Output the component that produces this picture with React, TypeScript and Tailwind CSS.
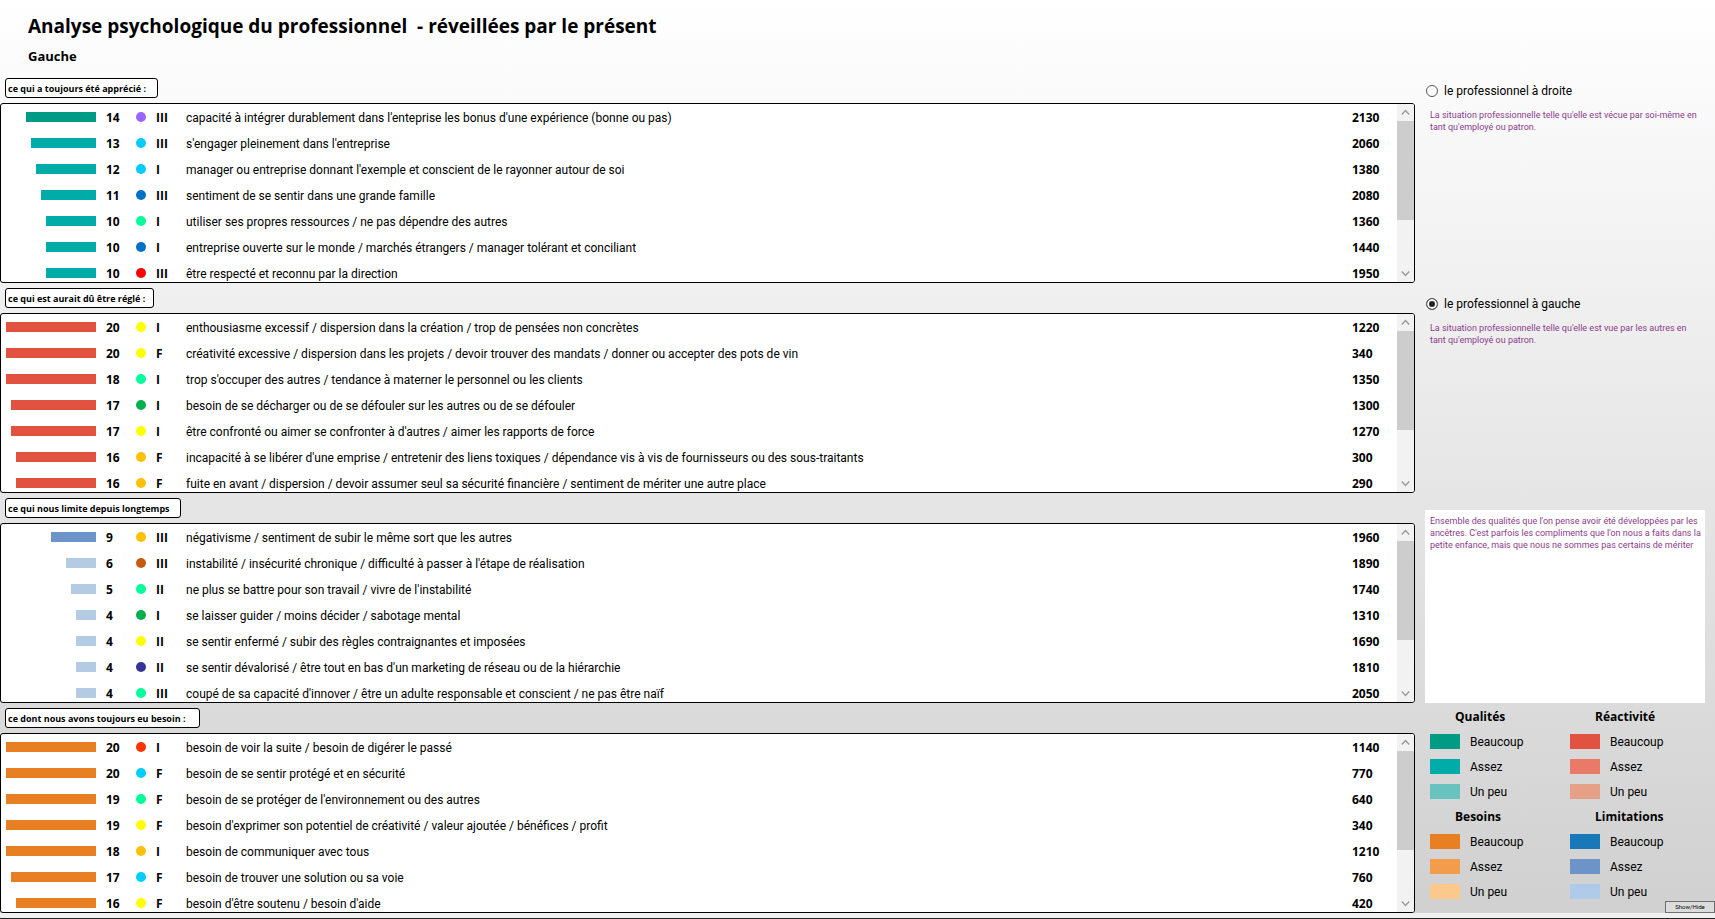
import React, { useState } from 'react';

type Row = {
  score: number;
  dot: string;
  level: string;
  text: string;
  code: number;
};

type Section = {
  title: string;
  tagWidth: string;
  color: (score: number) => string;
  rows: Row[];
};

const sections: Section[] = [
  {
    title: 'ce qui a toujours été apprécié :',
    tagWidth: 'w-[153px]',
    color: (score) => (score > 13 ? 'bg-[#009b84]' : 'bg-[#00aca8]'),
    rows: [
      { score: 14, dot: 'bg-[#9966ff]', level: 'III', text: "capacité à intégrer durablement dans l'enteprise les bonus d'une expérience (bonne ou pas)", code: 2130 },
      { score: 13, dot: 'bg-[#00ccff]', level: 'III', text: "s'engager pleinement dans l'entreprise", code: 2060 },
      { score: 12, dot: 'bg-[#00ccff]', level: 'I', text: "manager ou entreprise donnant l'exemple et conscient de le rayonner autour de soi", code: 1380 },
      { score: 11, dot: 'bg-[#0070c8]', level: 'III', text: 'sentiment de se sentir dans une grande famille', code: 2080 },
      { score: 10, dot: 'bg-[#00ff99]', level: 'I', text: 'utiliser ses propres ressources / ne pas dépendre des autres', code: 1360 },
      { score: 10, dot: 'bg-[#0070c8]', level: 'I', text: 'entreprise ouverte sur le monde / marchés étrangers / manager tolérant et conciliant', code: 1440 },
      { score: 10, dot: 'bg-[#ff0000]', level: 'III', text: 'être respecté et reconnu par la direction', code: 1950 },
    ],
  },
  {
    title: 'ce qui est aurait dû être réglé :',
    tagWidth: 'w-[149px]',
    color: () => 'bg-[#e15241]',
    rows: [
      { score: 20, dot: 'bg-[#ffff00]', level: 'I', text: 'enthousiasme excessif / dispersion dans la création / trop de pensées non concrètes', code: 1220 },
      { score: 20, dot: 'bg-[#ffff00]', level: 'F', text: 'créativité excessive / dispersion dans les projets / devoir trouver des mandats / donner ou accepter des pots de vin', code: 340 },
      { score: 18, dot: 'bg-[#00ff99]', level: 'I', text: "trop s'occuper des autres / tendance à materner le personnel ou les clients", code: 1350 },
      { score: 17, dot: 'bg-[#00b050]', level: 'I', text: 'besoin de se décharger ou de se défouler sur les autres ou de se défouler', code: 1300 },
      { score: 17, dot: 'bg-[#ffff00]', level: 'I', text: "être confronté ou aimer se confronter à d'autres / aimer les rapports de force", code: 1270 },
      { score: 16, dot: 'bg-[#ffc000]', level: 'F', text: "incapacité à se libérer d'une emprise / entretenir des liens toxiques / dépendance vis à vis de fournisseurs ou des sous-traitants", code: 300 },
      { score: 16, dot: 'bg-[#ffc000]', level: 'F', text: 'fuite en avant / dispersion / devoir assumer seul sa sécurité financière / sentiment de mériter une autre place', code: 290 },
    ],
  },
  {
    title: 'ce qui nous limite depuis longtemps',
    tagWidth: 'w-[176px]',
    color: (score) => (score > 8 ? 'bg-[#6c94c8]' : 'bg-[#b4cbe4]'),
    rows: [
      { score: 9, dot: 'bg-[#ffc000]', level: 'III', text: 'négativisme / sentiment de subir le même sort que les autres', code: 1960 },
      { score: 6, dot: 'bg-[#c55a11]', level: 'III', text: "instabilité / insécurité chronique / difficulté à passer à l'étape de réalisation", code: 1890 },
      { score: 5, dot: 'bg-[#00ff99]', level: 'II', text: "ne plus se battre pour son travail / vivre de l'instabilité", code: 1740 },
      { score: 4, dot: 'bg-[#00b050]', level: 'I', text: 'se laisser guider / moins décider / sabotage mental', code: 1310 },
      { score: 4, dot: 'bg-[#ffff00]', level: 'II', text: 'se sentir enfermé / subir des règles contraignantes et imposées', code: 1690 },
      { score: 4, dot: 'bg-[#333399]', level: 'II', text: "se sentir dévalorisé / être tout en bas d'un marketing de réseau ou de la hiérarchie", code: 1810 },
      { score: 4, dot: 'bg-[#00ff99]', level: 'III', text: "coupé de sa capacité d'innover / être un adulte responsable et conscient / ne pas être naïf", code: 2050 },
    ],
  },
  {
    title: 'ce dont nous avons toujours eu besoin :',
    tagWidth: 'w-[195px]',
    color: () => 'bg-[#e97f23]',
    rows: [
      { score: 20, dot: 'bg-[#ff3300]', level: 'I', text: 'besoin de voir la suite / besoin de digérer le passé', code: 1140 },
      { score: 20, dot: 'bg-[#00ccff]', level: 'F', text: 'besoin de se sentir protégé et en sécurité', code: 770 },
      { score: 19, dot: 'bg-[#00ff99]', level: 'F', text: "besoin de se protéger de l'environnement ou des autres", code: 640 },
      { score: 19, dot: 'bg-[#ffff00]', level: 'F', text: "besoin d'exprimer son potentiel de créativité / valeur ajoutée / bénéfices / profit", code: 340 },
      { score: 18, dot: 'bg-[#ffc000]', level: 'I', text: 'besoin de communiquer avec tous', code: 1210 },
      { score: 17, dot: 'bg-[#00ccff]', level: 'F', text: 'besoin de trouver une solution ou sa voie', code: 760 },
      { score: 16, dot: 'bg-[#ffff00]', level: 'F', text: "besoin d'être soutenu / besoin d'aide", code: 420 },
    ],
  },
];

const legends = [
  { title: 'Qualités', colors: ['bg-[#009b84]', 'bg-[#00aca8]', 'bg-[#68c2c0]'] },
  { title: 'Réactivité', colors: ['bg-[#e15241]', 'bg-[#ea7a68]', 'bg-[#e6a088]'] },
  { title: 'Besoins', colors: ['bg-[#e97f23]', 'bg-[#f29c4c]', 'bg-[#fcc88c]'] },
  { title: 'Limitations', colors: ['bg-[#1878b8]', 'bg-[#6c94c8]', 'bg-[#b0cbea]'] },
];

const levels = ['Beaucoup', 'Assez', 'Un peu'];

const choices = [
  {
    id: 'droite',
    label: 'le professionnel à droite',
    help: "La situation professionnelle telle qu'elle est vécue par soi-même en tant qu'employé ou patron.",
  },
  {
    id: 'gauche',
    label: 'le professionnel à gauche',
    help: "La situation professionnelle telle qu'elle est vue par les autres en tant qu'employé ou patron.",
  },
];

function Chevron({ down = false }: { down?: boolean }) {
  return (
    <svg viewBox="0 0 17 17" className={down ? 'size-[17px] rotate-180' : 'size-[17px]'} fill="none" stroke="#9a9a9a" strokeWidth="1.4">
      <path d="M4.8 10.5 8.5 6.5l3.7 4" />
    </svg>
  );
}

function ScrollBar() {
  return (
    <div className="flex w-[17px] shrink-0 flex-col bg-[#f2f2f2]">
      <button type="button" aria-label="Défiler vers le haut" className="h-[17px]">
        <Chevron />
      </button>
      <div className="h-[99px] bg-[#cdcdcd]" />
      <button type="button" aria-label="Défiler vers le bas" className="mt-auto h-[17px]">
        <Chevron down />
      </button>
    </div>
  );
}

function Panel({ section }: { section: Section }) {
  return (
    <section>
      <div className="flex h-[30px] items-center pl-[5px]">
        <h2 className={`${section.tagWidth} h-5 whitespace-nowrap rounded-[3px] border border-black bg-white pl-[2px] font-['Open_Sans'] text-[9px] font-bold leading-5`}>
          {section.title}
        </h2>
      </div>
      <div className="flex h-[180px] overflow-hidden rounded-[3px] border border-black bg-white">
        <table className="block min-w-0 flex-1 overflow-hidden text-xs">
          <tbody className="block">
            {section.rows.map((row, index) => (
              <tr key={index} className="flex h-[26px] items-center">
                <td className="flex w-[95px] justify-end">
                  <div className={`h-[10px] ${section.color(row.score)}`} style={{ width: Math.min(row.score, 18) * 5 }} />
                </td>
                <td className="w-10 pl-[10px] pt-[2px] font-['Open_Sans'] font-bold">{row.score}</td>
                <td className="w-5">
                  <div className={`size-[10px] rounded-full ${row.dot}`} />
                </td>
                <td className="w-[30px] pt-[2px] font-['Open_Sans'] font-bold">{row.level}</td>
                <td className="min-w-0 flex-1 whitespace-nowrap pt-[2px]">{row.text}</td>
                <td className="w-[45px] pt-[2px] font-['Open_Sans'] font-bold">{row.code}</td>
              </tr>
            ))}
          </tbody>
        </table>
        <ScrollBar />
      </div>
    </section>
  );
}

export default function App() {
  const [side, setSide] = useState('gauche');
  const [showHelp, setShowHelp] = useState(true);

  return (
    <div className="flex min-h-screen flex-col border-b border-[#222222] bg-linear-to-b from-white to-[#d0d0d0] font-['Roboto','Open_Sans',sans-serif] text-black">
      <header className="h-[73px] pl-7 font-['Open_Sans']">
        <h1 className="whitespace-pre pt-3 text-[19px] font-bold leading-7">{'Analyse psychologique du professionnel  - réveillées par le présent'}</h1>
        <p className="pt-1 text-[13px] font-bold leading-6">Gauche</p>
      </header>

      <div className="flex flex-1">
        <main className="min-w-0 flex-1">
          {sections.map((section) => (
            <Panel key={section.title} section={section} />
          ))}
        </main>

        <aside className="relative w-[300px] shrink-0 pl-[10px]">
          {choices.map((choice) => (
            <div key={choice.id} className="h-[213px] pt-2">
              <label className="flex h-5 items-center gap-[6px] pl-px text-xs">
                <input
                  type="radio"
                  name="side"
                  value={choice.id}
                  checked={side === choice.id}
                  onChange={() => setSide(choice.id)}
                  className="size-3 appearance-none rounded-full border border-[#555555] bg-white checked:bg-[#222222] checked:shadow-[inset_0_0_0_2px_white]"
                />
                {choice.label}
              </label>
              <p className="pl-[5px] pr-3 pt-2 text-[9px] leading-3 text-[#8c3c8c]">{choice.help}</p>
            </div>
          ))}

          <div className="mr-[10px] mt-[11px] h-[193px] bg-white py-[5px] pl-[5px] text-[9px] leading-3 text-[#8c3c8c]">
            {showHelp &&
              "Ensemble des qualités que l'on pense avoir été développées par les ancêtres. C'est parfois les compliments que l'on nous a faits dans la petite enfance, mais que nous ne sommes pas certains de mériter"}
          </div>

          <div className="grid grid-cols-[140px_140px] pl-[5px] pt-px text-xs">
            {legends.map((legend) => (
              <section key={legend.title}>
                <h3 className="h-[25px] pl-[25px] font-['Open_Sans'] font-bold leading-[25px]">{legend.title}</h3>
                <ul>
                  {levels.map((level, i) => (
                    <li key={level} className="flex h-[25px] items-center gap-[10px]">
                      <span className={`h-[15px] w-[30px] ${legend.colors[i]}`} />
                      {level}
                    </li>
                  ))}
                </ul>
              </section>
            ))}
          </div>

          {/* floats over the corner of the legend */}
          <button
            type="button"
            onClick={() => setShowHelp(!showHelp)}
            className="absolute bottom-0 right-0 h-3 w-[50px] border border-[#707070] bg-[#dddddd] text-[6px] leading-none"
          >
            Show/Hide
          </button>
        </aside>
      </div>
      <footer className="h-[5px] bg-[#f0f0f0]" />
    </div>
  );
}
